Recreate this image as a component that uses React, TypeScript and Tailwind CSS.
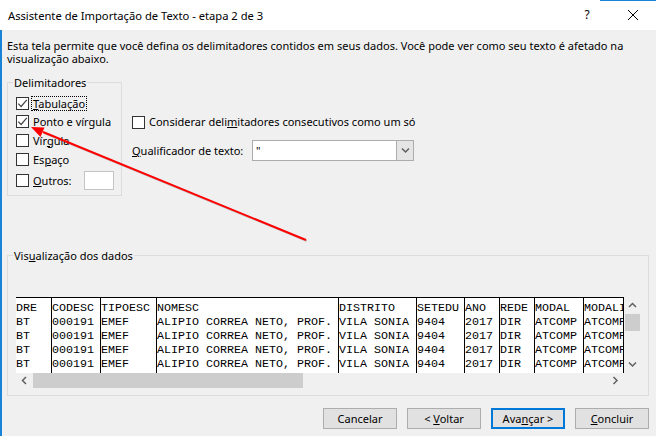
import React from 'react';

const ui = "font-['Noto_Sans',sans-serif]";

const Check = ({ checked }: { checked?: boolean }) => (
  <span className="w-[13px] h-[13px] border border-[#333333] bg-white flex items-center justify-center shrink-0">
    {checked && (
      <svg width="11" height="11" viewBox="0 0 11 11">
        <path d="M1.2 5.6 L4.1 8.5 L9.8 1.8" stroke="#444" strokeWidth="1.2" fill="none" />
      </svg>
    )}
  </span>
);

const cols = [
  { w: 36, head: 'DRE', val: 'BT' },
  { w: 49, head: 'CODESC', val: '000191' },
  { w: 56, head: 'TIPOESC', val: 'EMEF' },
  { w: 182, head: 'NOMESC', val: 'ALIPIO CORREA NETO, PROF.' },
  { w: 78, head: 'DISTRITO', val: 'VILA SONIA' },
  { w: 48, head: 'SETEDU', val: '9404' },
  { w: 35, head: 'ANO', val: '2017' },
  { w: 35, head: 'REDE', val: 'DIR' },
  { w: 49, head: 'MODAL', val: 'ATCOMP' },
  { w: 40, head: 'MODALIDADE', val: 'ATCOMPL' },
];

const Chev = ({ dir }: { dir: 'up' | 'down' | 'left' | 'right' }) => {
  const d = {
    up: 'M1 5 L4.5 1.5 L8 5',
    down: 'M1 1.5 L4.5 5 L8 1.5',
    left: 'M5 1 L1.5 4.5 L5 8',
    right: 'M1.5 1 L5 4.5 L1.5 8',
  }[dir];
  const vert = dir === 'up' || dir === 'down';
  return (
    <svg width={vert ? 9 : 7} height={vert ? 7 : 9} viewBox={vert ? '0 0 9 7' : '0 0 7 9'}>
      <path d={d} stroke="#606060" strokeWidth="1.5" fill="none" />
    </svg>
  );
};

export default function App() {
  return (
    <div className={`w-[656px] h-[436px] overflow-hidden relative bg-[#f0f0f0] text-[11px] text-black whitespace-nowrap ${ui}`}>
      {/* title bar */}
      <div className="h-[30px] bg-white flex items-center relative">
        <div className="absolute top-0 right-0 w-[56px] h-[1px] bg-[#1883d7]" />
        <span className="pl-[8px] leading-[13px] text-[11.2px]">Assistente de Importação de Texto - etapa 2 de 3</span>
        <div className="flex-1" />
        <span className="w-[46px] text-center text-[12px]">?</span>
        <span className="w-[46px] flex items-center justify-center">
          <svg width="10" height="10" viewBox="0 0 10 10">
            <path d="M0 0 L10 10 M10 0 L0 10" stroke="#000" strokeWidth="1" />
          </svg>
        </span>
      </div>

      <div className="border-l-2 border-[#1883d7] h-[406px] pl-[5px] pr-[7px] flex flex-col">
        <p className="pt-[9px] leading-[13px]">
          Esta tela permite que você defina os delimitadores contidos em seus dados. Você pode ver como seu texto é afetado na
          <br />
          visualização abaixo.
        </p>

        <div className="flex mt-[10.5px]">
          <fieldset className="border border-[#dcdcdc] w-[115px] h-[120px] p-0">
            <legend className="ml-[5px] px-[1px] leading-[13px]">Delimitadores</legend>
            <div className="pl-[8px] pt-[6px] flex flex-col">
              <div className="h-[18px] flex items-center">
                <Check checked />
                <span className="ml-[2px] px-[1px] leading-[13px] border border-dotted border-black">
                  <span className="underline">T</span>abulação
                </span>
              </div>
              <div className="h-[18px] flex items-center">
                <Check checked />
                <span className="ml-[4px] leading-[13px]">Ponto e vírgula</span>
              </div>
              <div className="h-[19px] flex items-center">
                <Check />
                <span className="ml-[4px] leading-[13px]">
                  Vír<span className="underline">g</span>ula
                </span>
              </div>
              <div className="h-[19px] flex items-center">
                <Check />
                <span className="ml-[4px] leading-[13px]">
                  Es<span className="underline">p</span>aço
                </span>
              </div>
              <div className="h-[21px] mt-[1px] flex items-center">
                <Check />
                <span className="ml-[4px] w-[51px] leading-[13px]">
                  <span className="underline">O</span>utros:
                </span>
                <span className="w-[30px] h-[19px] bg-white border border-[#c4c4c4]" />
              </div>
            </div>
          </fieldset>

          <div className="ml-[10px] pt-[39px] flex flex-col">
            <div className="h-[16px] flex items-center">
              <Check />
              <span className="ml-[4px] leading-[13px] -mt-[3px]">
                Considerar deli<span className="underline">m</span>itadores consecutivos como um só
              </span>
            </div>
            <div className="h-[21px] mt-[9.5px] flex items-center">
              <span className="w-[120px] leading-[13px]">
                <span className="underline">Q</span>ualificador de texto:
              </span>
              <div className="w-[162px] h-[21px] bg-white border border-[#acacac] flex">
                <span className="flex-1 pl-[3px] leading-[19px]">"</span>
                <span className="w-[17px] h-full bg-[#e5e5e5] border-l border-[#acacac] flex items-center justify-center">
                  <Chev dir="down" />
                </span>
              </div>
            </div>
          </div>
        </div>

        <fieldset className="border border-[#dcdcdc] w-[642px] h-[146.5px] mt-[53.5px] p-0">
          <legend className="ml-[5px] px-[1px] leading-[13px]">
            Vis<span className="underline">u</span>alização dos dados
          </legend>
          <div className="pl-[8px] mt-[34.5px]">
            <div className="flex">
              <div className="w-[608px] h-[76px] bg-white border-t border-black flex overflow-hidden font-['Liberation_Mono',monospace] text-[11.67px] leading-[14px] text-black">
                {cols.map((c, i) => (
                  <div
                    key={i}
                    className="h-full border-r border-black pt-[3px] overflow-hidden shrink-0"
                    style={{ width: c.w }}
                  >
                    <div>{c.head}</div>
                    {[0, 1, 2, 3].map(r => (
                      <div key={r}>{c.val}</div>
                    ))}
                  </div>
                ))}
              </div>
              <div className="w-[16px] h-[76px] flex flex-col items-center">
                <div className="h-[17px] flex items-center justify-center">
                  <Chev dir="up" />
                </div>
                <div className="w-[15px] h-[17px] bg-[#cdcdcd]" />
                <div className="flex-1" />
                <div className="h-[17px] flex items-center justify-center">
                  <Chev dir="down" />
                </div>
              </div>
            </div>
            <div className="w-[608px] h-[16px] flex items-center">
              <div className="w-[17px] flex justify-center">
                <Chev dir="left" />
              </div>
              <div className="w-[270px] h-[15px] bg-[#cdcdcd]" />
              <div className="flex-1" />
              <div className="w-[17px] flex justify-center">
                <Chev dir="right" />
              </div>
            </div>
          </div>
        </fieldset>

        <div className="flex justify-end gap-[10px] mt-[12px]">
          <button className="w-[74px] h-[21px] bg-[#e1e1e1] border border-[#adadad] leading-[13px]">Cancelar</button>
          <button className="w-[74px] h-[21px] bg-[#e1e1e1] border border-[#adadad] leading-[13px]">
            &lt; <span className="underline">V</span>oltar
          </button>
          <button className="w-[74px] h-[21px] bg-[#e1e1e1] border-2 border-[#0078d7] leading-[13px]">
            Ava<span className="underline">n</span>çar &gt;
          </button>
          <button className="w-[74px] h-[21px] bg-[#e1e1e1] border border-[#adadad] leading-[13px]">
            <span className="underline">C</span>oncluir
          </button>
        </div>
      </div>

      {/* red arrow annotation */}
      <svg className="absolute top-0 left-0 pointer-events-none" width="656" height="436">
        <line x1="44" y1="133" x2="307" y2="241" stroke="#000" strokeOpacity="0.18" strokeWidth="2" />
        <line x1="43" y1="132" x2="306" y2="240" stroke="#ff0000" strokeWidth="2" />
        <polygon points="31,127 44.5,127.5 40.5,137" fill="#ff0000" />
      </svg>
    </div>
  );
}
